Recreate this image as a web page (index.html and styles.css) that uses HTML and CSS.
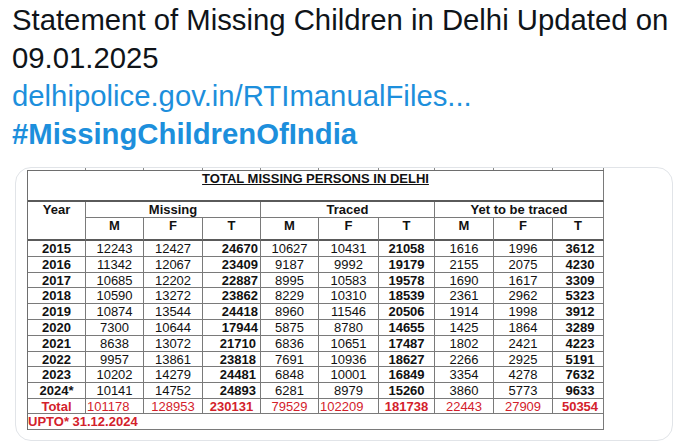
FILE: index.html
```html
<!DOCTYPE html>
<html lang="en">
<head>
<meta charset="utf-8">
<title>Statement of Missing Children in Delhi</title>
<link rel="stylesheet" href="styles.css">
</head>
<body>
<div class="tweet">
  <p class="tweet-text">Statement of Missing Children in Delhi Updated on 09.01.2025<br><a class="link" href="#">delhipolice.gov.in/RTImanualFiles...</a><br><a class="hashtag" href="#">#MissingChildrenOfIndia</a></p>
  <div class="card">
    <div class="ticks"><span></span><span></span><span></span><span></span><span></span><span></span><span></span><span></span><span></span><span></span></div>
    <div class="stat-table">
      <div class="c title"><span class="title-text">TOTAL MISSING PERSONS IN DELHI</span></div>
      <div class="c b year-head">Year</div>
      <div class="c b group">Missing</div>
      <div class="c b group">Traced</div>
      <div class="c b group">Yet to be traced</div>
      <div class="c b sub">M</div><div class="c b sub">F</div><div class="c b sub">T</div>
      <div class="c b sub">M</div><div class="c b sub">F</div><div class="c b sub">T</div>
      <div class="c b sub">M</div><div class="c b sub">F</div><div class="c b sub">T</div>

      <div class="c b">2015</div><div class="c">12243</div><div class="c">12427</div><div class="c b r">24670</div><div class="c">10627</div><div class="c">10431</div><div class="c b">21058</div><div class="c">1616</div><div class="c">1996</div><div class="c b yt">3612</div>
      <div class="c b">2016</div><div class="c">11342</div><div class="c">12067</div><div class="c b r">23409</div><div class="c">9187</div><div class="c">9992</div><div class="c b">19179</div><div class="c">2155</div><div class="c">2075</div><div class="c b yt">4230</div>
      <div class="c b">2017</div><div class="c">10685</div><div class="c">12202</div><div class="c b r">22887</div><div class="c">8995</div><div class="c">10583</div><div class="c b">19578</div><div class="c">1690</div><div class="c">1617</div><div class="c b yt">3309</div>
      <div class="c b">2018</div><div class="c">10590</div><div class="c">13272</div><div class="c b r">23862</div><div class="c">8229</div><div class="c">10310</div><div class="c b">18539</div><div class="c">2361</div><div class="c">2962</div><div class="c b yt">5323</div>
      <div class="c b">2019</div><div class="c">10874</div><div class="c">13544</div><div class="c b r">24418</div><div class="c">8960</div><div class="c">11546</div><div class="c b">20506</div><div class="c">1914</div><div class="c">1998</div><div class="c b yt">3912</div>
      <div class="c b">2020</div><div class="c">7300</div><div class="c">10644</div><div class="c b r">17944</div><div class="c">5875</div><div class="c">8780</div><div class="c b">14655</div><div class="c">1425</div><div class="c">1864</div><div class="c b yt">3289</div>
      <div class="c b">2021</div><div class="c">8638</div><div class="c">13072</div><div class="c b r r4">21710</div><div class="c">6836</div><div class="c">10651</div><div class="c b">17487</div><div class="c">1802</div><div class="c">2421</div><div class="c b yt">4223</div>
      <div class="c b">2022</div><div class="c">9957</div><div class="c">13861</div><div class="c b r r4">23818</div><div class="c">7691</div><div class="c">10936</div><div class="c b">18627</div><div class="c">2266</div><div class="c">2925</div><div class="c b yt">5191</div>
      <div class="c b">2023</div><div class="c">10202</div><div class="c">14279</div><div class="c b r r4">24481</div><div class="c">6848</div><div class="c">10001</div><div class="c b">16849</div><div class="c">3354</div><div class="c">4278</div><div class="c b yt">7632</div>
      <div class="c b">2024*</div><div class="c">10141</div><div class="c">14752</div><div class="c b r r4">24893</div><div class="c">6281</div><div class="c">8979</div><div class="c b">15260</div><div class="c">3860</div><div class="c">5773</div><div class="c b yt">9633</div>

      <div class="c b red">Total</div><div class="c red l">101178</div><div class="c red">128953</div><div class="c b red">230131</div><div class="c red">79529</div><div class="c red l">102209</div><div class="c b red">181738</div><div class="c red">22443</div><div class="c red">27909</div><div class="c b red yt">50354</div>

      <div class="c upto">UPTO* 31.12.2024</div>
    </div>
  </div>
</div>
</body>
</html>
```

FILE: styles.css
```css
body {
  margin: 0;
  background: #ffffff;
  font-family: "Liberation Sans", Arial, sans-serif;
}

.tweet-text {
  margin: 0;
  padding: 1px 4px 0 12px;
  font-size: 29.3px;
  line-height: 38px;
  color: #0f1419;
}

.link,
.hashtag {
  color: #1d8fdc;
  text-decoration: none;
}

.hashtag {
  font-weight: bold;
}

.card {
  margin: 14px 0 0 15px;
  width: 658px;
  height: 274px;
  box-sizing: border-box;
  border: 1px solid #e1e4e8;
  border-radius: 16px;
  overflow: hidden;
  padding-left: 11px;
  background: #ffffff;
}

.ticks,
.stat-table {
  display: grid;
  grid-template-columns: 58px 58px 59px 58px 58px 60px 56px 59px 59px 51px;
}

.ticks {
  height: 2px;
  padding-left: 1px;
}

.ticks span {
  border-right: 1px solid #8a8a8a;
}

.stat-table {
  grid-template-rows: 31px 16px 23px 16px 16px 15px 16px 16px 16px 16px 15px 16px 16px 15px 16px;
  width: 577px;
  box-sizing: border-box;
  border-top: 1px solid #6e6e6e;
  border-left: 1px solid #6e6e6e;
  font-size: 13px;
  color: #111111;
}

.c {
  display: flex;
  align-items: center;
  justify-content: center;
  border-right: 1px solid #7a7a7a;
  border-bottom: 1px solid #7a7a7a;
  line-height: 15px;
  white-space: nowrap;
  overflow: hidden;
}

.title {
  grid-column: 1 / -1;
  align-items: flex-start;
  border-bottom: 2px solid #5a5a5a;
  font-weight: bold;
  font-size: 13px;
}

.title-text {
  text-decoration: underline;
}

.year-head {
  grid-row: span 2;
  align-items: flex-start;
  border-bottom: 2px solid #5a5a5a;
}

.group {
  grid-column: span 3;
}

.sub {
  align-items: flex-start;
  border-bottom: 2px solid #5a5a5a;
}

.b {
  font-weight: bold;
}

.r {
  justify-content: flex-end;
  padding-right: 2px;
}

.r4 {
  padding-right: 4px;
}

.l {
  justify-content: flex-start;
  padding-left: 1px;
}

.yt {
  padding-left: 4px;
}

.red {
  color: #d3212b;
}

.upto {
  grid-column: 1 / -1;
  justify-content: flex-start;
  font-weight: bold;
  font-size: 13px;
  color: #d3212b;
}
```
